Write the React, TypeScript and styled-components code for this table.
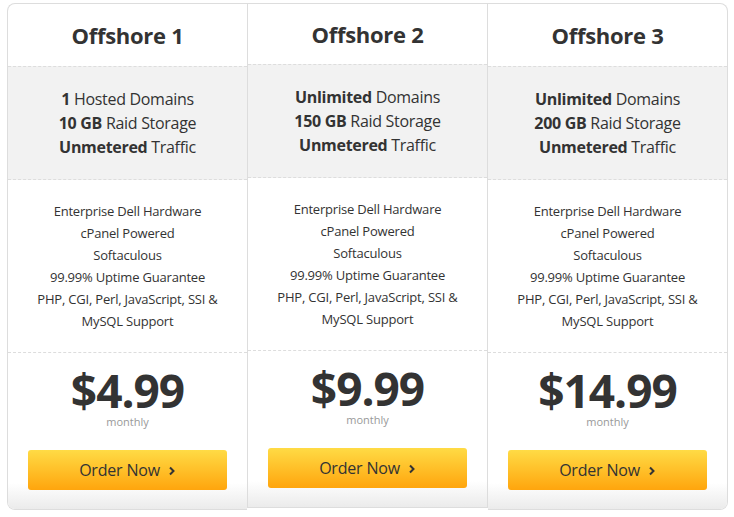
import React from "react";
import styled, { createGlobalStyle } from "styled-components";

const Global = createGlobalStyle`
  html, body { margin: 0; padding: 0; background: #fff; }
  body { font-family: "Open Sans", "DejaVu Sans", sans-serif; color: #333; }
`;

const Page = styled.div`
  padding: 3px 0 0 7px;
`;

const Table = styled.div`
  display: flex;
  align-items: flex-start;
`;

type Pos = "first" | "middle" | "last";

const Column = styled.div<{ $pos: Pos }>`
  display: flex;
  flex-direction: column;
  width: 239px;
  background: #fff;
  border-top: 1px solid #ddd;
  border-bottom: 1px solid #ddd;
  border-left: ${(p) => (p.$pos === "last" ? "none" : "1px solid #ddd")};
  border-right: ${(p) => (p.$pos === "first" ? "none" : "1px solid #ddd")};
  border-radius: ${(p) =>
    p.$pos === "first" ? "8px 0 0 8px" : p.$pos === "last" ? "0 8px 8px 0" : "0"};
  height: ${(p) => (p.$pos === "middle" ? "503px" : "505px")};
  overflow: hidden;
`;

const Header = styled.div<{ $featured: boolean }>`
  height: ${(p) => (p.$featured ? "60px" : "62px")};
  display: flex;
  align-items: center;
  justify-content: center;
`;

const Title = styled.h2`
  margin: 0;
  font-size: 22px;
  font-weight: 700;
  color: #333;
  letter-spacing: -0.3px;
`;

const Specs = styled.div`
  background: #f2f2f2;
  border-top: 1px dashed #ddd;
  border-bottom: 1px dashed #ddd;
  padding: 20px 0;
  text-align: center;
  font-size: 16px;
  line-height: 24px;
  letter-spacing: -0.3px;
  color: #333;
  b { font-weight: 700; }
`;

const Features = styled.ul`
  list-style: none;
  margin: 0;
  padding: 20px 0;
  border-bottom: 1px dashed #ddd;
  text-align: center;
  font-size: 13px;
  line-height: 22px;
  letter-spacing: -0.2px;
  color: #333;
`;

const PriceBox = styled.div`
  flex: 1;
  display: flex;
  flex-direction: column;
  align-items: center;
  padding-top: 14px;
  background: linear-gradient(to bottom, #fff calc(100% - 26px), #ebebeb 100%);
`;

const Price = styled.div`
  font-size: 46px;
  line-height: 46px;
  font-weight: 700;
  letter-spacing: -1px;
  color: #333;
`;

const Period = styled.div`
  font-size: 11px;
  line-height: 14px;
  color: #999;
  margin-top: 2px;
`;

const OrderButton = styled.a`
  margin-top: 21px;
  width: 199px;
  height: 40px;
  border-radius: 3px;
  background: linear-gradient(to bottom, #ffdb45 0%, #ffa50d 100%);
  display: flex;
  align-items: center;
  justify-content: center;
  gap: 8px;
  font-size: 16px;
  letter-spacing: -0.2px;
  color: #333;
  text-decoration: none;
  cursor: pointer;
`;

const Chevron = styled.svg`
  width: 8px;
  height: 10px;
  margin-top: 1px;
`;

type Plan = {
  name: string;
  domains: [string, string];
  storage: string;
  price: string;
};

const plans: Plan[] = [
  { name: "Offshore 1", domains: ["1", "Hosted Domains"], storage: "10 GB", price: "$4.99" },
  { name: "Offshore 2", domains: ["Unlimited", "Domains"], storage: "150 GB", price: "$9.99" },
  { name: "Offshore 3", domains: ["Unlimited", "Domains"], storage: "200 GB", price: "$14.99" },
];

const featureList = [
  "Enterprise Dell Hardware",
  "cPanel Powered",
  "Softaculous",
  "99.99% Uptime Guarantee",
  "PHP, CGI, Perl, JavaScript, SSI &",
  "MySQL Support",
];

export default function App() {
  return (
    <>
      <Global />
      <Page>
        <Table>
          {plans.map((p, i) => {
            const pos: Pos = i === 0 ? "first" : i === 1 ? "middle" : "last";
            const featured = pos === "middle";
            return (
              <Column key={p.name} $pos={pos}>
                <Header $featured={featured}>
                  <Title>{p.name}</Title>
                </Header>
                <Specs>
                  <div>
                    <b>{p.domains[0]}</b> {p.domains[1]}
                  </div>
                  <div>
                    <b>{p.storage}</b> Raid Storage
                  </div>
                  <div>
                    <b>Unmetered</b> Traffic
                  </div>
                </Specs>
                <Features>
                  {featureList.map((f) => (
                    <li key={f}>{f}</li>
                  ))}
                </Features>
                <PriceBox>
                  <Price>{p.price}</Price>
                  <Period>monthly</Period>
                  <OrderButton>
                    Order Now
                    <Chevron viewBox="0 0 8 10">
                      <path d="M2 1.5 L5.5 5 L2 8.5" fill="none" stroke="#333" strokeWidth="2" />
                    </Chevron>
                  </OrderButton>
                </PriceBox>
              </Column>
            );
          })}
        </Table>
      </Page>
    </>
  );
}
